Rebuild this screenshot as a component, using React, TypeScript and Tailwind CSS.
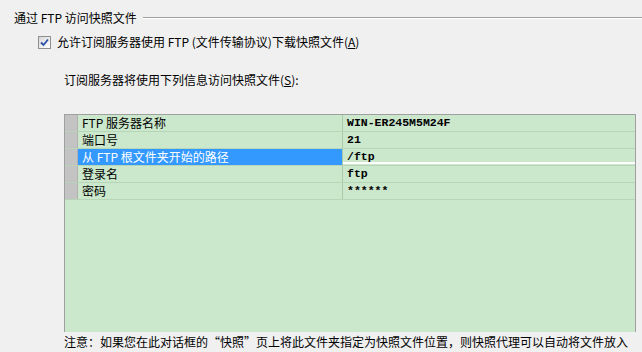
import React from "react";

const rows = [
  { label: "FTP 服务器名称", value: "WIN-ER245M5M24F" },
  { label: "端口号", value: "21" },
  { label: "从 FTP 根文件夹开始的路径", value: "/ftp", selected: true },
  { label: "登录名", value: "ftp" },
  { label: "密码", value: "******" },
];

export default function App() {
  return (
    <div
      className="w-[642px] h-[352px] overflow-hidden bg-[#f0f0f0] text-black text-[12px] leading-[16px]"
      style={{ fontFamily: '"Noto Sans CJK SC", "Liberation Sans", sans-serif' }}
    >
      {/* group title */}
      <div className="mt-[10px] ml-[14px] flex items-center h-[16px]">
        <span className="whitespace-nowrap">通过 FTP 访问快照文件</span>
        <div className="flex-1 ml-[6px] h-[2px] border-t border-[#a0a0a0] border-b border-b-white" />
      </div>

      {/* checkbox */}
      <div className="mt-[8px] ml-[38px] flex items-center h-[16px]">
        <div className="w-[13px] h-[13px] border border-[#8f8f8f] bg-gradient-to-br from-[#d8d8d8] to-white flex items-center justify-center">
          <svg width="9" height="9" viewBox="0 0 9 9">
            <path d="M1 4.5 L3.5 7 L8 1.5" fill="none" stroke="#2a4fa8" strokeWidth="1.8" />
          </svg>
        </div>
        <span className="ml-[6px] whitespace-nowrap">
          允许订阅服务器使用 FTP (文件传输协议)下载快照文件(<span className="underline">A</span>)
        </span>
      </div>

      {/* label */}
      <div className="mt-[22px] ml-[64px] h-[16px] whitespace-nowrap">
        订阅服务器将使用下列信息访问快照文件(<span className="underline">S</span>):
      </div>

      {/* property grid */}
      <div className="mt-[26px] ml-[64px] w-[572px] h-[218px] border-t border-l border-r border-[#a0a0a0] bg-[#cbe7cc] flex flex-col">
        {rows.map((r) => (
          <div key={r.label} className="flex h-[17px] border-b border-[#b6d6b7]">
            <div className="w-[13px] shrink-0 bg-[#c3c3c3] border-r border-[#b0b0b0]" />
            <div
              className={
                r.selected
                  ? "w-[264px] shrink-0 pl-[4px] bg-[#3399ff] text-white whitespace-nowrap leading-[16px]"
                  : "w-[264px] shrink-0 pl-[4px] whitespace-nowrap leading-[16px]"
              }
            >
              {r.label}
            </div>
            <div className="flex-1 border-l border-[#a9c9aa] relative">
              <div
                className="pl-[4px] font-bold text-[11.5px] leading-[16px] whitespace-nowrap"
                style={{ fontFamily: '"Liberation Mono", monospace' }}
              >
                {r.value}
              </div>
              {r.selected && (
                <div className="absolute left-0 right-0 bottom-[1px] h-[2px] bg-white" />
              )}
            </div>
          </div>
        ))}
      </div>

      {/* note */}
      <div className="mt-[2px] ml-[64px] w-[576px] whitespace-nowrap h-[16px]">
        注意：如果您在此对话框的“快照”页上将此文件夹指定为快照文件位置，则快照代理可以自动将文件放入
      </div>
    </div>
  );
}
